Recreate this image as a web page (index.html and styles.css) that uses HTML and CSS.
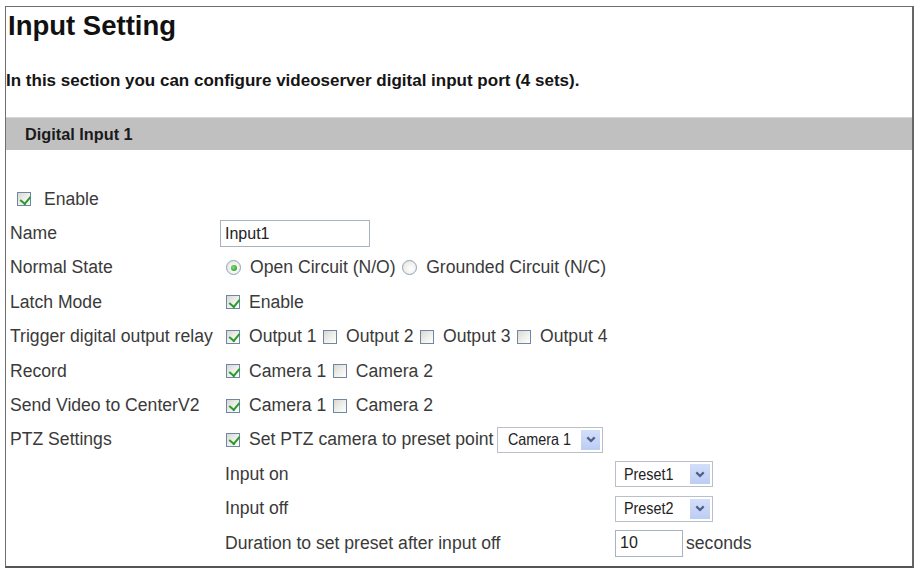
FILE: index.html
```html
<!DOCTYPE html>
<html>
<head>
<meta charset="utf-8">
<title>Input Setting</title>
<link rel="stylesheet" href="styles.css">
</head>
<body>
<div class="frame">
  <h1 class="title">Input Setting</h1>
  <p class="intro">In this section you can configure videoserver digital input port (4 sets).</p>
  <div class="bar">Digital Input 1</div>
  <div class="form">
    <div class="enable-row">
      <input type="checkbox" class="cb" checked>
      <span>Enable</span>
    </div>
    <div class="row">
      <span class="lbl">Name</span>
      <span class="val"><input type="text" class="txt name" value="Input1"></span>
    </div>
    <div class="row">
      <span class="lbl">Normal State</span>
      <span class="val opts">
        <label class="opt"><input type="radio" class="rd" name="ns" checked>Open Circuit (N/O)</label>
        <label class="opt"><input type="radio" class="rd" name="ns">Grounded Circuit (N/C)</label>
      </span>
    </div>
    <div class="row">
      <span class="lbl">Latch Mode</span>
      <span class="val opts">
        <label class="opt"><input type="checkbox" class="cb" checked>Enable</label>
      </span>
    </div>
    <div class="row">
      <span class="lbl">Trigger digital output relay</span>
      <span class="val opts">
        <label class="opt"><input type="checkbox" class="cb" checked>Output 1</label>
        <label class="opt"><input type="checkbox" class="cb">Output 2</label>
        <label class="opt"><input type="checkbox" class="cb">Output 3</label>
        <label class="opt"><input type="checkbox" class="cb">Output 4</label>
      </span>
    </div>
    <div class="row">
      <span class="lbl">Record</span>
      <span class="val opts">
        <label class="opt"><input type="checkbox" class="cb" checked>Camera 1</label>
        <label class="opt"><input type="checkbox" class="cb">Camera 2</label>
      </span>
    </div>
    <div class="row">
      <span class="lbl">Send Video to CenterV2</span>
      <span class="val opts">
        <label class="opt"><input type="checkbox" class="cb" checked>Camera 1</label>
        <label class="opt"><input type="checkbox" class="cb">Camera 2</label>
      </span>
    </div>
    <div class="row">
      <span class="lbl">PTZ Settings</span>
      <span class="val opts">
        <label class="opt"><input type="checkbox" class="cb" checked>Set PTZ camera to preset point</label>
        <span class="dd cam"><span class="dd-text">Camera 1</span><span class="dd-btn"><svg width="10" height="7" viewBox="0 0 10 7"><path d="M1.3 1.4 L5 5 L8.7 1.4" fill="none" stroke="#4a5f8a" stroke-width="2.2"/></svg></span></span>
      </span>
    </div>
    <div class="row sub">
      <span class="sublbl">Input on</span>
      <span class="dd preset"><span class="dd-text">Preset1</span><span class="dd-btn"><svg width="10" height="7" viewBox="0 0 10 7"><path d="M1.3 1.4 L5 5 L8.7 1.4" fill="none" stroke="#4a5f8a" stroke-width="2.2"/></svg></span></span>
    </div>
    <div class="row sub">
      <span class="sublbl">Input off</span>
      <span class="dd preset"><span class="dd-text">Preset2</span><span class="dd-btn"><svg width="10" height="7" viewBox="0 0 10 7"><path d="M1.3 1.4 L5 5 L8.7 1.4" fill="none" stroke="#4a5f8a" stroke-width="2.2"/></svg></span></span>
    </div>
    <div class="row sub">
      <span class="sublbl">Duration to set preset after input off</span>
      <span class="dur"><input type="text" class="txt secs" value="10"><span class="unit">seconds</span></span>
    </div>
  </div>
</div>
</body>
</html>
```
FILE: styles.css
```css
* { box-sizing: border-box; }
html, body { margin: 0; padding: 0; background: #fff; }
body {
  width: 920px;
  height: 570px;
  overflow: hidden;
  font-family: "Liberation Sans", Arial, sans-serif;
  color: #3a3a3a;
}
.frame {
  margin: 6px 0 0 5px;
  width: 909px;
  height: 562px;
  border-top: 1px solid #6e6e6e;
  border-left: 1px solid #6e6e6e;
  border-right: 2px solid #666;
  border-bottom: 2px solid #555;
  background: #fff;
}
.title {
  margin: 3px 0 0 2px;
  font-size: 27.5px;
  font-weight: bold;
  color: #111;
  line-height: 31px;
}
.intro {
  margin: 29.5px 0 0 0;
  font-size: 17px;
  font-weight: bold;
  color: #151515;
  line-height: 20px;
}
.bar {
  margin-top: 26.5px;
  height: 33px;
  background: #c0c0c0;
  border-top: 1px solid #d6d6d6;
  padding-left: 19px;
  display: flex;
  align-items: center;
  font-size: 16.3px;
  font-weight: bold;
  color: #1a1a1a;
}
.form {
  margin-top: 32px;
  padding-left: 4px;
  font-size: 17.6px;
}
.enable-row, .row {
  height: 34.4px;
  display: flex;
  align-items: center;
}
.enable-row { padding-left: 7px; gap: 13px; }
.lbl { width: 210px; flex: none; }
.val { display: flex; align-items: center; }
.opts { gap: 6.5px; padding-left: 6px; }
.opt { display: inline-flex; align-items: center; gap: 9px; }
.opts .dd { margin-left: -2.5px; }
.sub { padding-left: 215px; }
.sublbl { width: 390px; flex: none; }
.cb, .rd {
  -webkit-appearance: none;
  appearance: none;
  margin: 0;
  width: 14px;
  height: 14px;
  flex: none;
  position: relative;
  border: 1px solid #6f87a5;
  background: linear-gradient(135deg, #d9d9d3 0%, #f1f1ee 60%, #ffffff 100%);
}
.cb:checked::after {
  content: "";
  position: absolute;
  left: 3.5px;
  top: 0.5px;
  width: 4.5px;
  height: 8px;
  border-right: 2.5px solid #2a9b2a;
  border-bottom: 2.5px solid #2a9b2a;
  transform: rotate(40deg);
}
.rd {
  width: 15px;
  height: 15px;
  border-radius: 50%;
  border-color: #8ea2ba;
  background: radial-gradient(circle at 60% 60%, #ffffff 0%, #eceae4 70%, #d8d6d0 100%);
}
.rd:checked::after {
  content: "";
  position: absolute;
  left: 3.5px;
  top: 3.5px;
  width: 6px;
  height: 6px;
  border-radius: 50%;
  background: radial-gradient(circle at 40% 40%, #7ee07e 0%, #2a9e2a 80%);
}
.txt {
  font-family: "Liberation Sans", Arial, sans-serif;
  font-size: 16px;
  color: #222;
  border: 1px solid #a7b3c3;
  background: #fff;
  padding: 0 0 0 4px;
  margin: 0;
  outline: none;
}
.name { width: 150px; height: 27px; }
.secs { width: 68px; height: 27px; }
.dur { display: flex; align-items: center; }
.unit { margin-left: 3px; }
.dd {
  display: inline-flex;
  align-items: center;
  height: 26px;
  border: 1px solid #b9c0ca;
  background: #fff;
  padding: 2px;
  font-family: "Liberation Sans", Arial, sans-serif;
  font-size: 16.5px;
  color: #222;
}
.dd-text {
  flex: 1;
  margin-left: 8px;
  white-space: nowrap;
  transform: scaleX(0.87);
  transform-origin: left center;
}
.dd-btn {
  width: 20px;
  height: 20px;
  background: linear-gradient(#d3defa, #bccdf4);
  display: flex;
  align-items: center;
  justify-content: center;
}
.cam { width: 106px; }
.preset { width: 98px; }
.preset .dd-text { margin-left: 6px; }
```
